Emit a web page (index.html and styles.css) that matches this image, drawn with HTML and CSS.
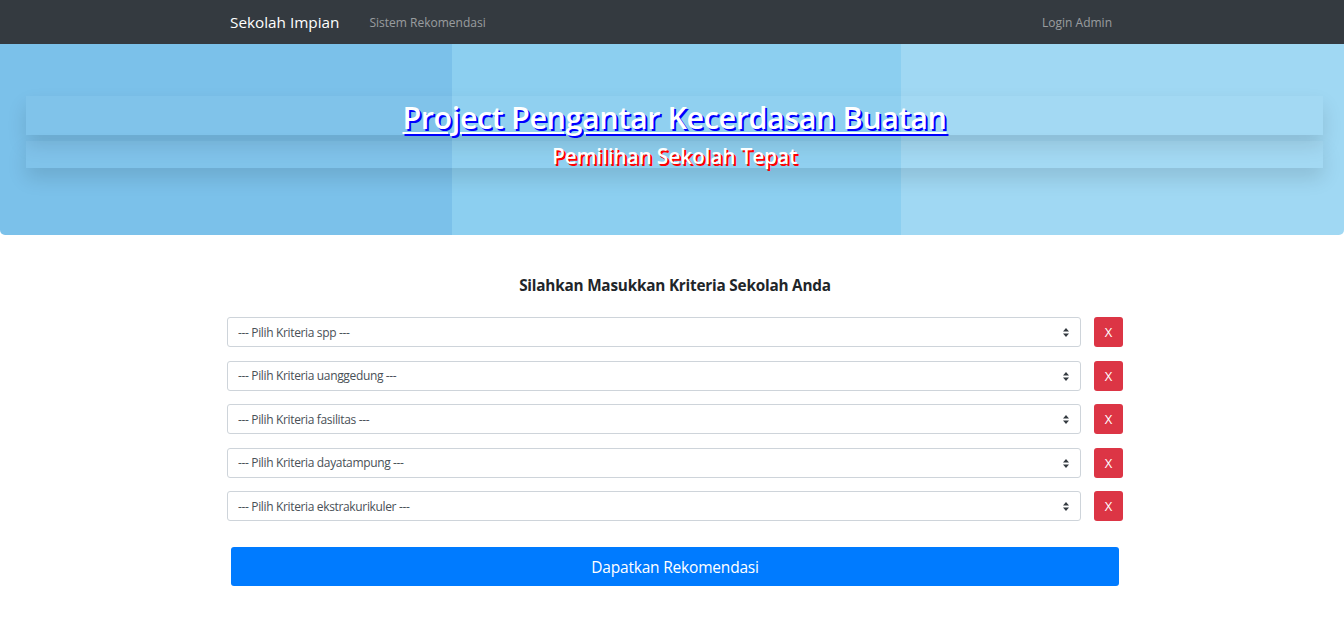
FILE: index.html
```html
<!DOCTYPE html>
<html lang="id">
<head>
<meta charset="utf-8">
<title>Sekolah Impian</title>
<link rel="stylesheet" href="styles.css">
</head>
<body>
<nav class="navbar">
  <div class="nav-inner">
    <a class="brand" href="#">Sekolah Impian</a>
    <a class="nav-link" href="#">Sistem Rekomendasi</a>
    <span class="spacer"></span>
    <a class="nav-link" href="#">Login Admin</a>
  </div>
</nav>
<header class="hero">
  <div class="band band-title"><a class="title" href="#">Project Pengantar Kecerdasan Buatan</a></div>
  <div class="band band-sub"><span class="subtitle">Pemilihan Sekolah Tepat</span></div>
</header>
<main class="main">
  <h5 class="heading">Silahkan Masukkan Kriteria Sekolah Anda</h5>
  <form class="form">
    <div class="row">
      <div class="select-wrap"><select class="select"><option>--- Pilih Kriteria spp ---</option></select><svg class="arrow" width="6" height="9" viewBox="0 0 6 9"><path d="M3 0L6 3.5H0z M3 9L0 5.5H6z" fill="#343a40"/></svg></div>
      <button type="button" class="btn-x">X</button>
    </div>
    <div class="row">
      <div class="select-wrap"><select class="select"><option>--- Pilih Kriteria uanggedung ---</option></select><svg class="arrow" width="6" height="9" viewBox="0 0 6 9"><path d="M3 0L6 3.5H0z M3 9L0 5.5H6z" fill="#343a40"/></svg></div>
      <button type="button" class="btn-x">X</button>
    </div>
    <div class="row">
      <div class="select-wrap"><select class="select"><option>--- Pilih Kriteria fasilitas ---</option></select><svg class="arrow" width="6" height="9" viewBox="0 0 6 9"><path d="M3 0L6 3.5H0z M3 9L0 5.5H6z" fill="#343a40"/></svg></div>
      <button type="button" class="btn-x">X</button>
    </div>
    <div class="row">
      <div class="select-wrap"><select class="select"><option>--- Pilih Kriteria dayatampung ---</option></select><svg class="arrow" width="6" height="9" viewBox="0 0 6 9"><path d="M3 0L6 3.5H0z M3 9L0 5.5H6z" fill="#343a40"/></svg></div>
      <button type="button" class="btn-x">X</button>
    </div>
    <div class="row">
      <div class="select-wrap"><select class="select"><option>--- Pilih Kriteria ekstrakurikuler ---</option></select><svg class="arrow" width="6" height="9" viewBox="0 0 6 9"><path d="M3 0L6 3.5H0z M3 9L0 5.5H6z" fill="#343a40"/></svg></div>
      <button type="button" class="btn-x">X</button>
    </div>
    <button type="button" class="btn-submit">Dapatkan Rekomendasi</button>
  </form>
</main>
</body>
</html>
```
FILE: styles.css
```css
* { box-sizing: border-box; }
html, body { margin: 0; padding: 0; }
body {
  font-family: "Open Sans", "Noto Sans", sans-serif;
  background: #fff;
  color: #212529;
}
.navbar {
  height: 44px;
  background: #343a40;
}
.nav-inner {
  width: 900px;
  height: 44px;
  margin: 0 auto;
  padding: 0 10px 0 8px;
  display: flex;
  align-items: center;
}
.brand {
  color: #fff;
  text-decoration: none;
  font-size: 15.3px;
  margin-right: 30px;
}
.nav-link {
  color: rgba(255,255,255,.5);
  text-decoration: none;
  font-size: 12px;
}
.spacer { flex: 1; }

.hero {
  height: 191px;
  padding-top: 52px;
  border-radius: 0 0 5px 5px;
  background: linear-gradient(to right, #7bc1ea 0, #7bc1ea 452px, #8ccff0 452px, #8ccff0 901px, #a0d8f3 901px);
  display: flex;
  flex-direction: column;
  gap: 6px;
}
.band {
  margin: 0 21px 0 26px;
  background: rgba(255,255,255,.04);
  box-shadow: 0 10px 20px rgba(0,0,0,.12);
  display: flex;
  justify-content: center;
  align-items: center;
}
.band-title { height: 39px; }
.band-sub { height: 27px; }
.title {
  color: #fff;
  font-size: 30.5px;
  font-weight: 600;
  letter-spacing: -0.4px;
  text-decoration: underline;
  text-decoration-thickness: 2px;
  text-underline-offset: 3px;
  text-shadow: 2px 2px 0 #0000ff;
  line-height: 1;
  padding-top: 4px;
}
.subtitle {
  color: #fff;
  font-size: 21px;
  font-weight: 600;
  letter-spacing: -0.2px;
  text-shadow: 2px 2px 0 #ff0000;
  line-height: 1;
  padding-top: 4px;
}

.main {
  width: 896px;
  margin: 0 auto;
  padding-top: 40px;
  transform: translateX(3px);
}
.heading {
  margin: 0 0 22px;
  text-align: center;
  font-size: 15.3px;
  font-weight: 700;
  line-height: 20px;
  letter-spacing: -0.2px;
}
.form {
  display: flex;
  flex-direction: column;
  gap: 13.5px;
}
.row {
  display: flex;
  align-items: center;
  gap: 13px;
  height: 30px;
}
.select-wrap {
  position: relative;
  flex: 1;
  height: 30px;
}
.select {
  appearance: none;
  -webkit-appearance: none;
  width: 100%;
  height: 30px;
  border: 1px solid #ced4da;
  border-radius: 3px;
  background: #fff;
  color: #495057;
  font-family: "Open Sans", "Noto Sans", sans-serif;
  font-size: 12px;
  letter-spacing: -0.35px;
  padding: 0 10px;
}
.arrow {
  position: absolute;
  right: 12px;
  top: 11px;
}
.btn-x {
  width: 29px;
  height: 30px;
  border: none;
  border-radius: 3px;
  background: #dc3545;
  color: #fff;
  font-family: "Open Sans", sans-serif;
  font-size: 13px;
  padding: 0;
}
.btn-submit {
  margin: 12.5px 4px 0;
  height: 39px;
  border: none;
  border-radius: 3px;
  background: #007bff;
  color: #fff;
  font-family: "Open Sans", sans-serif;
  font-size: 15.5px;
  letter-spacing: -0.2px;
}
```
